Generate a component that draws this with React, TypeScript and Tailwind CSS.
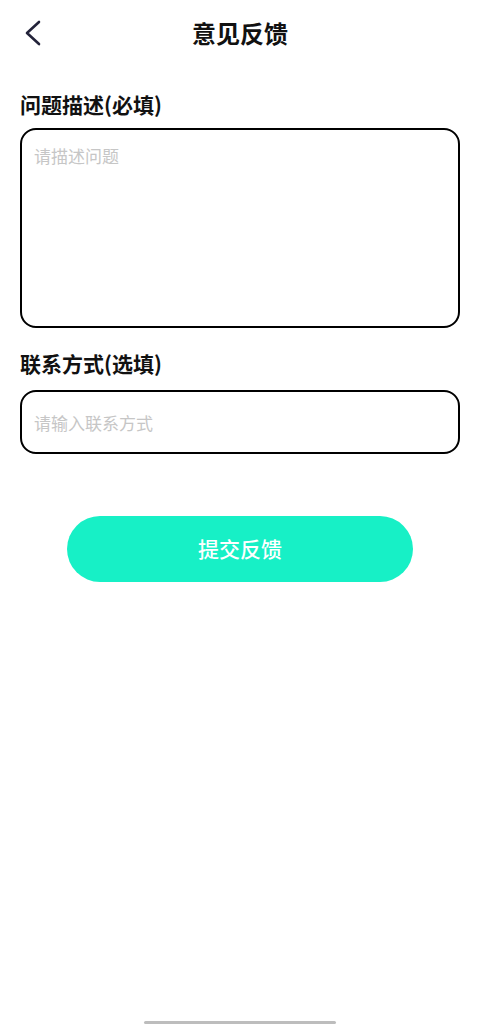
const font = { fontFamily: '"Noto Sans CJK SC", "Noto Sans", sans-serif' }

function FieldLabel({ children }: { children: React.ReactNode }) {
  return <div className="text-[21px] leading-[28px] font-semibold text-[#111111]">{children}</div>
}

export default function App() {
  return (
    <div className="relative min-h-[1024px] w-full bg-white" style={font}>
      {/* top bar */}
      <header className="grid h-[66px] grid-cols-[1fr_auto_1fr] items-center px-5">
        <button className="flex items-center">
          <svg width="24" height="26" viewBox="0 0 24 26" fill="none">
            <path d="M19 2 L7 13 L19 24" stroke="#23233a" strokeWidth="2.6" strokeLinecap="round" strokeLinejoin="round" />
          </svg>
        </button>
        <h1 className="text-[24px] font-bold text-[#111111]">意见反馈</h1>
        <div />
      </header>

      <main className="px-5">
        <div className="mt-6">
          <FieldLabel>问题描述(必填)</FieldLabel>
        </div>
        <textarea
          placeholder="请描述问题"
          className="mt-[10px] block h-[200px] w-full resize-none rounded-[16px] border-[2.5px] border-black px-[12px] py-[14px] text-[17px] leading-[24px] text-[#333] outline-none placeholder:text-[#c6c6c6]"
        />

        <div className="mt-[21px]">
          <FieldLabel>联系方式(选填)</FieldLabel>
        </div>
        <input
          placeholder="请输入联系方式"
          className="mt-[13px] block h-[64px] w-full rounded-[16px] border-[2.5px] border-black px-[12px] text-[17px] text-[#333] outline-none placeholder:text-[#c6c6c6]"
        />

        <button className="mx-auto mt-[62px] flex h-[66px] w-[346px] items-center justify-center rounded-full bg-[#17f0c6] text-[21px] font-medium text-white">
          提交反馈
        </button>
      </main>

      {/* home indicator */}
      <div className="absolute bottom-0 left-1/2 h-[3px] w-[192px] -translate-x-1/2 rounded-full bg-[#bdbdbd]" />
    </div>
  )
}
